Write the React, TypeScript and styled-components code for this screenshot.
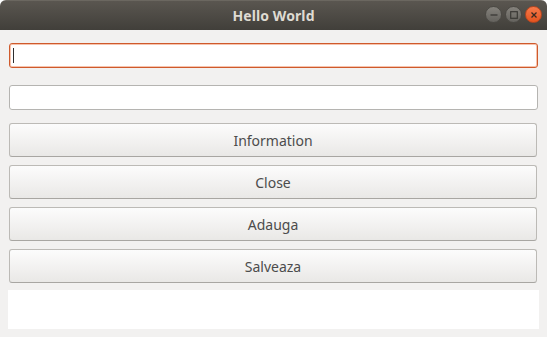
import styled, { createGlobalStyle } from "styled-components";

const GlobalStyle = createGlobalStyle`
  html, body {
    margin: 0;
    padding: 0;
    background: #ffffff;
  }
  body {
    font-family: "Noto Sans", "DejaVu Sans", sans-serif;
  }
`;

const Window = styled.div`
  width: 547px;
  height: 337px;
  display: flex;
  flex-direction: column;
  background: #f2f1f0;
  border-radius: 6px 6px 0 0;
  overflow: hidden;
`;

const TitleBar = styled.header`
  height: 30px;
  flex: none;
  position: relative;
  display: flex;
  align-items: center;
  justify-content: center;
  background: linear-gradient(#5a5650, #413f3a);
  border-top: 1px solid #6b6760;
  box-sizing: border-box;
`;

const Title = styled.h1`
  margin: 0;
  font-size: 14px;
  font-weight: 700;
  color: #dfdbd2;
  letter-spacing: 0.1px;
`;

const Controls = styled.div`
  position: absolute;
  right: 5px;
  top: 5px;
  display: flex;
  gap: 3px;
`;

const CtlButton = styled.div<{ $close?: boolean }>`
  width: 17px;
  height: 17px;
  border-radius: 50%;
  display: flex;
  align-items: center;
  justify-content: center;
  box-sizing: border-box;
  border: 1px solid ${(p) => (p.$close ? "#b8461f" : "#4b4944")};
  background: ${(p) =>
    p.$close
      ? "linear-gradient(#f7794a, #e4541f)"
      : "linear-gradient(#85827c, #64625d)"};
`;

const Content = styled.main`
  flex: 1;
  display: flex;
  flex-direction: column;
  padding: 13px 9px 0 9px;
`;

const Entry = styled.div<{ $focused?: boolean; $gap: number }>`
  height: 25px;
  box-sizing: border-box;
  margin-bottom: ${(p) => p.$gap}px;
  display: flex;
  align-items: center;
  padding-left: 3px;
  background: #ffffff;
  border-radius: 3px;
  border: 1px solid ${(p) => (p.$focused ? "#cf5a2c" : "#b5b4b1")};
  box-shadow: ${(p) => (p.$focused ? "inset 0 0 0 1px #f6c3ad" : "none")};
`;

const Caret = styled.span`
  width: 1px;
  height: 15px;
  background: #2e2e2e;
`;

const ButtonStack = styled.div`
  display: flex;
  flex-direction: column;
  gap: 8px;
`;

const PushButton = styled.button`
  height: 34px;
  width: 528px;
  box-sizing: border-box;
  border: 1px solid #bcbab6;
  border-bottom-color: #a8a6a2;
  border-radius: 3px;
  background: linear-gradient(#fcfcfc, #f2f1f0 55%, #e9e8e6);
  font-family: "Noto Sans", "DejaVu Sans", sans-serif;
  font-size: 14px;
  color: #4c4c4c;
  padding: 0;
`;

const TextArea = styled.div`
  height: 39px;
  margin: 7px -1px 0 -1px;
  background: #ffffff;
`;

export default function App() {
  return (
    <>
      <GlobalStyle />
      <Window>
        <TitleBar>
          <Title>Hello World</Title>
          <Controls>
            <CtlButton>
              <svg width="8" height="8" viewBox="0 0 8 8">
                <path d="M0.5 4H7.5" stroke="#3a3935" strokeWidth="1.3" />
              </svg>
            </CtlButton>
            <CtlButton>
              <svg width="8" height="8" viewBox="0 0 8 8">
                <rect x="0.7" y="0.7" width="6.6" height="6.6" fill="none" stroke="#3a3935" strokeWidth="1.2" />
              </svg>
            </CtlButton>
            <CtlButton $close>
              <svg width="8" height="8" viewBox="0 0 8 8">
                <path d="M1.5 1.5L6.5 6.5M6.5 1.5L1.5 6.5" stroke="#3a2a22" strokeWidth="1.3" />
              </svg>
            </CtlButton>
          </Controls>
        </TitleBar>
        <Content>
          <Entry $focused $gap={17}>
            <Caret />
          </Entry>
          <Entry $gap={13} />
          <ButtonStack>
            <PushButton>Information</PushButton>
            <PushButton>Close</PushButton>
            <PushButton>Adauga</PushButton>
            <PushButton>Salveaza</PushButton>
          </ButtonStack>
          <TextArea />
        </Content>
      </Window>
    </>
  );
}
